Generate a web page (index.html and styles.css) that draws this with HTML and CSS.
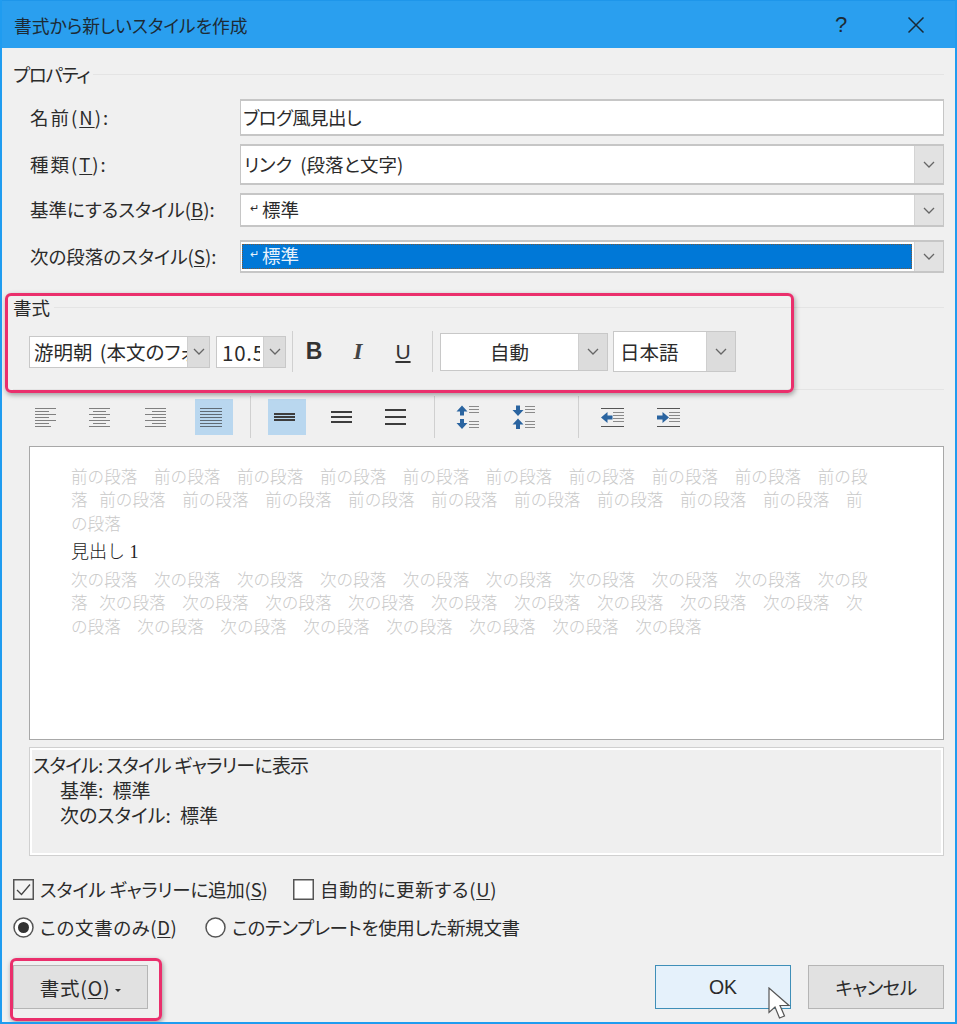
FILE: index.html
```html
<!DOCTYPE html>
<html lang="ja">
<head>
<meta charset="utf-8">
<title>書式から新しいスタイルを作成</title>
<link rel="stylesheet" href="styles.css">
</head>
<body>
<svg class="defs" width="0" height="0" aria-hidden="true">
  <symbol id="chev" viewBox="0 0 12 7"><path d="M1 1l5 5 5-5" fill="none" stroke="#666" stroke-width="1.3"/></symbol>
  <symbol id="al-left" viewBox="0 0 38 36"><path d="M8 9.500h21M8 12.500h14M8 15.500h21M8 18.500h14M8 21.500h21M8 24.500h14M8 27.500h16" stroke="#808080" fill="none"/></symbol>
  <symbol id="al-center" viewBox="0 0 38 36"><path d="M6 9.500h21M10 12.500h13M6 15.500h21M10 18.500h13M6 21.500h21M10 24.500h13M6 27.500h21" stroke="#808080" fill="none"/></symbol>
  <symbol id="al-right" viewBox="0 0 38 36"><path d="M6 9.500h21M13 12.500h14M6 15.500h21M13 18.500h14M6 21.500h21M13 24.500h14M6 27.500h21" stroke="#808080" fill="none"/></symbol>
  <symbol id="al-just" viewBox="0 0 38 36"><path d="M5 9.500h22M5 12.500h22M5 15.500h22M5 18.500h22M5 21.500h22M5 24.500h22M5 27.500h22" stroke="#5f6b75" fill="none"/></symbol>
  <symbol id="sp-1" viewBox="0 0 38 36"><path d="M6 15h21M6 18h21M6 21h21" stroke="#3d3d3d" stroke-width="2" fill="none"/></symbol>
  <symbol id="sp-15" viewBox="0 0 38 36"><path d="M8 13h21M8 18h21M8 23h21" stroke="#3d3d3d" stroke-width="2" fill="none"/></symbol>
  <symbol id="sp-2" viewBox="0 0 38 36"><path d="M8 11h21M8 18h21M8 25h21" stroke="#3d3d3d" stroke-width="2" fill="none"/></symbol>
  <symbol id="para-inc" viewBox="0 0 38 36"><path d="M10 6.500l5.500 6h-3.500v4h-4v-4h-3.500zM10 30l5.500-6h-3.500v-4h-4v4h-3.500z" fill="#2a64a0"/><path d="M17 7.500h10M17 10.500h10M17 13.500h10M17 22.500h10M17 25.500h10M17 28.500h10" stroke="#8a8a8a" fill="none"/></symbol>
  <symbol id="para-dec" viewBox="0 0 38 36"><path d="M10 17l5.500-6h-3.500v-4.500h-4v4.500h-3.500zM10 19.500l5.500 6h-3.500v4.500h-4v-4.500h-3.500z" fill="#2a64a0"/><path d="M17 7.500h10M17 10.500h10M17 13.500h10M17 22.500h10M17 25.500h10M17 28.500h10" stroke="#8a8a8a" fill="none"/></symbol>
  <symbol id="ind-dec" viewBox="0 0 38 36"><path d="M7 9.500h23M7 27.500h23" stroke="#555" fill="none"/><path d="M19 13.500h11M19 16.500h11M19 19.500h11M19 22.500h11" stroke="#8a8a8a" fill="none"/><path d="M7 18.500l6.500-5.500v3.500h5v4h-5v3.500z" fill="#2a64a0"/></symbol>
  <symbol id="ind-inc" viewBox="0 0 38 36"><path d="M8 9.500h23M8 27.500h23" stroke="#555" fill="none"/><path d="M20 13.500h11M20 16.500h11M20 19.500h11M20 22.500h11" stroke="#8a8a8a" fill="none"/><path d="M20 18.500l-6.500-5.500v3.500h-5.500v4h5.500v3.500z" fill="#2a64a0"/></symbol>
</svg>

<div class="dialog">
  <header class="titlebar">
    <h1 class="title">書式から新しいスタイルを作成</h1>
    <span class="help">?</span>
    <svg class="close" width="18" height="18" viewBox="0 0 18 18"><path d="M1.500 1.500l15 15M16.500 1.500l-15 15" stroke="#1a2a36" stroke-width="1.500" fill="none"/></svg>
  </header>

  <main class="content">
    <div class="legend legend-props"><span>プロパティ</span><i class="legend-line"></i></div>

    <div class="row row-name">
      <label class="row-label row-label-wide">名前(<u>N</u>):</label>
      <div class="field"><span class="value value-name">ブログ風見出し</span></div>
    </div>
    <div class="row row-type">
      <label class="row-label row-label-wide">種類(<u>T</u>):</label>
      <div class="field"><span class="value value-type">リンク (段落と文字)</span>
        <span class="drop"><svg width="12" height="7"><use href="#chev"/></svg></span></div>
    </div>
    <div class="row row-base">
      <label class="row-label">基準にするスタイル(<u>B</u>):</label>
      <div class="field"><span class="value value-style"><span class="ret">↵</span>標準</span>
        <span class="drop"><svg width="12" height="7"><use href="#chev"/></svg></span></div>
    </div>
    <div class="row row-next">
      <label class="row-label">次の段落のスタイル(<u>S</u>):</label>
      <div class="field"><span class="selected"><span class="ret">↵</span>標準</span>
        <span class="drop"><svg width="12" height="7"><use href="#chev"/></svg></span></div>
    </div>

    <div class="legend legend-format"><span>書式</span><i class="legend-line"></i></div>

    <div class="font-bar">
      <div class="combo combo-font"><span class="combo-text">游明朝 (本文のフォント)</span><span class="combo-drop"><svg width="12" height="7"><use href="#chev"/></svg></span></div>
      <div class="combo combo-size"><span class="combo-text">10.5</span><span class="combo-drop"><svg width="12" height="7"><use href="#chev"/></svg></span></div>
      <i class="sep sep-a"></i>
      <b class="fmt fmt-b">B</b>
      <span class="fmt fmt-i">I</span>
      <span class="fmt fmt-u">U</span>
      <i class="sep sep-b"></i>
      <div class="combo combo-color"><span class="combo-text">自動</span><span class="combo-drop"><svg width="12" height="7"><use href="#chev"/></svg></span></div>
      <div class="combo combo-lang"><span class="combo-text">日本語</span><span class="combo-drop"><svg width="12" height="7"><use href="#chev"/></svg></span></div>
    </div>

    <hr class="rule">

    <div class="para-bar">
      <div class="group group-1">
        <span class="tool"><svg width="38" height="36"><use href="#al-left"/></svg></span>
        <span class="tool"><svg width="38" height="36"><use href="#al-center"/></svg></span>
        <span class="tool"><svg width="38" height="36"><use href="#al-right"/></svg></span>
        <span class="tool on"><svg width="38" height="36"><use href="#al-just"/></svg></span>
      </div>
      <i class="sep sep-c"></i>
      <div class="group group-2">
        <span class="tool on"><svg width="38" height="36"><use href="#sp-1"/></svg></span>
        <span class="tool"><svg width="38" height="36"><use href="#sp-15"/></svg></span>
        <span class="tool"><svg width="38" height="36"><use href="#sp-2"/></svg></span>
      </div>
      <i class="sep sep-d"></i>
      <div class="group group-3">
        <span class="tool"><svg width="38" height="36"><use href="#para-inc"/></svg></span>
        <span class="tool"><svg width="38" height="36"><use href="#para-dec"/></svg></span>
      </div>
      <i class="sep sep-e"></i>
      <div class="group group-4">
        <span class="tool"><svg width="38" height="36"><use href="#ind-dec"/></svg></span>
        <span class="tool"><svg width="38" height="36"><use href="#ind-inc"/></svg></span>
      </div>
    </div>

    <section class="preview">
      <p class="ghost">前の段落　前の段落　前の段落　前の段落　前の段落　前の段落　前の段落　前の段落　前の段落　前の段落&ensp;&thinsp;前の段落　前の段落　前の段落　前の段落　前の段落　前の段落　前の段落　前の段落　前の段落　前の段落</p>
      <p class="sample">見出し 1</p>
      <p class="ghost">次の段落　次の段落　次の段落　次の段落　次の段落　次の段落　次の段落　次の段落　次の段落　次の段落&ensp;&thinsp;次の段落　次の段落　次の段落　次の段落　次の段落　次の段落　次の段落　次の段落　次の段落　次の段落　次の段落　次の段落　次の段落　次の段落　次の段落　次の段落　次の段落</p>
    </section>

    <section class="desc">
      <div class="desc-head">スタイル: スタイル ギャラリーに表示</div>
      <div class="desc-sub">基準: 標準</div>
      <div class="desc-sub">次のスタイル: 標準</div>
    </section>

    <div class="opt-row opt-row-a">
      <span class="check-item check-gallery">
        <svg class="box" width="21" height="21" viewBox="0 0 21 21"><rect x=".75" y=".75" width="19.500" height="19.500" fill="#f3f3f3" stroke="#555" stroke-width="1.500"/><path d="M4 11l4.500 4.500L17 5.500" fill="none" stroke="#444" stroke-width="1.300"/></svg>
        <span class="lbl-gallery">スタイル ギャラリーに追加(<u>S</u>)</span>
      </span>
      <span class="check-item">
        <svg class="box" width="21" height="21" viewBox="0 0 21 21"><rect x=".75" y=".75" width="19.500" height="19.500" fill="#fff" stroke="#555" stroke-width="1.500"/></svg>
        <span class="lbl-auto">自動的に更新する(<u>U</u>)</span>
      </span>
    </div>
    <div class="opt-row opt-row-b">
      <span class="check-item check-doc">
        <svg class="box" width="21" height="21" viewBox="0 0 21 21"><circle cx="10.500" cy="10.500" r="9.500" fill="#fff" stroke="#555" stroke-width="1.500"/><circle cx="10.500" cy="10.500" r="5.500" fill="#333"/></svg>
        <span class="lbl-doc">この文書のみ(<u>D</u>)</span>
      </span>
      <span class="check-item">
        <svg class="box" width="21" height="21" viewBox="0 0 21 21"><circle cx="10.500" cy="10.500" r="9.500" fill="#fff" stroke="#555" stroke-width="1.500"/></svg>
        <span class="lbl-tpl">このテンプレートを使用した新規文書</span>
      </span>
    </div>

    <div class="footer">
      <button class="btn btn-format">書式(<u>O</u>)<i class="caret"></i></button>
      <div class="footer-right">
        <button class="btn btn-ok">OK</button>
        <button class="btn btn-cancel">キャンセル</button>
      </div>
    </div>
  </main>

  <div class="mark mark-toolbar"></div>
  <div class="mark mark-button"></div>
  <svg class="cursor" width="24" height="33" viewBox="0 0 24 33"><path d="M1 1v24.500l6-5.500 4.500 11 5-2-4.500-10.500h9z" fill="#fff" stroke="#555" stroke-width="1.200"/></svg>
</div>
</body>
</html>
```

FILE: styles.css
```css
* { box-sizing: border-box; }
html, body { margin: 0; padding: 0; }
body {
  font-family: "Noto Sans CJK JP", "Noto Sans", sans-serif;
  font-size: 18.5px;
  color: #2b2b2b;
  font-feature-settings: "palt";
}
.defs { position: absolute; }
u { text-underline-offset: 2px; }

.dialog {
  position: relative;
  width: 957px;
  height: 1024px;
  overflow: hidden;
  background: #f0f0f0;
  border: solid #1f9cf0;
  border-width: 0 2px 2px;
}
.titlebar {
  display: flex;
  align-items: center;
  height: 48px;
  margin: 0 -2px;
  padding: 0 32px 0 14px;
  background: #2a9fef;
  border-top: 1px solid #1e96ea;
}
.title {
  flex: 1;
  margin: 0;
  font-size: 17.8px;
  font-weight: 400;
  color: #1d2b35;
}
.help {
  width: 20px;
  margin-right: 56px;
  font-family: "Liberation Sans", sans-serif;
  font-size: 22px;
  text-align: center;
  color: #1d2b35;
}

.content { padding: 15px 11px 0; }
.legend {
  display: flex;
  align-items: center;
  height: 22px;
  line-height: 20px;
}
.legend-line {
  flex: 1;
  height: 1px;
  margin-left: 4px;
  background: #e4e4e4;
}
.legend-props { margin-bottom: 14px; letter-spacing: -1.200px; }
.legend-format { margin-top: 23px; }

.row { display: flex; align-items: center; }
.row-label { width: 227px; padding: 0 0 2px 17px; font-size: 18.5px; white-space: nowrap; }
.row-label-wide { letter-spacing: 2px; }
.row-name { height: 37px; }
.row-type { height: 41px; margin-top: 8px; }
.row-base { height: 34px; margin-top: 8px; }
.row-next { height: 33px; margin-top: 13px; }

.field {
  display: flex;
  flex: 1;
  align-items: stretch;
  align-self: stretch;
  background: #fff;
  border: 1px solid #c6c6c6;
  border-width: 2px 1px 2px 1px;
}
.value { flex: 1; align-self: center; padding-bottom: 2px; }
.value-name { padding-left: 2px; letter-spacing: -.6px; }
.value-type { padding-left: 3px; word-spacing: 4px; }
.value-style { padding-left: 9px; }
.ret { font-size: 11px; line-height: 1; display: inline-block; width: 12px; vertical-align: 5px; color: inherit; }
.drop {
  display: flex;
  align-items: center;
  justify-content: center;
  width: 29px;
  background: #e2e2e2;
  border-left: 1px solid #d4d4d4;
}
.selected {
  flex: 1;
  display: block;
  margin: 2px 2px 2px 1px;
  padding-left: 8px;
  line-height: 23px;
  color: #e8f2fb;
  background: #0078d7;
  outline: 1px dotted #7a5a3c;
  outline-offset: -1px;
}

.font-bar {
  display: flex;
  align-items: center;
  height: 41px;
  margin-top: 13px;
  padding-left: 16px;
}
.combo {
  display: flex;
  align-items: stretch;
  background: #fff;
  border: 1px solid #c8c8c8;
  white-space: nowrap;
}
.combo-text {
  flex: 1;
  min-width: 0;
  overflow: hidden;
  align-self: center;
  line-height: 28px;
  font-size: 19.5px;
}
.combo-drop {
  display: flex;
  align-items: center;
  justify-content: center;
  background: #dcdcdc;
  border-left: 1px solid #cfcfcf;
}
.combo-font { width: 181px; height: 32px; }
.combo-font .combo-text { margin: 0 0 0 4px; word-spacing: 3px; }
.combo-font .combo-drop { width: 22px; }
.combo-size { width: 70px; height: 32px; margin-left: 6px; }
.combo-size .combo-text { margin: 0 3px 0 5px; letter-spacing: .8px; font-size: 20.5px; }
.combo-size .combo-drop { width: 22px; }
.combo-color { width: 168px; height: 38px; margin-left: 7px; }
.combo-color .combo-text { text-align: center; }
.combo-color .combo-drop { width: 29px; }
.combo-lang { width: 123px; height: 41px; margin-left: 5px; }
.combo-lang .combo-text { padding-left: 6px; }
.combo-lang .combo-drop { width: 29px; }

.sep { display: block; width: 1px; background: #d0d0d0; }
.font-bar .sep { height: 41px; }
.sep-a { margin-left: 6px; }
.sep-b { margin-left: 19px; }
.fmt {
  width: 20px;
  text-align: center;
  font-family: "Liberation Sans", sans-serif;
  font-size: 23px;
  color: #333;
}
.fmt-b { margin-left: 11px; font-weight: 700; }
.fmt-i { margin-left: 24px; font-family: "Liberation Serif", serif; font-style: italic; font-weight: 700; color: #444; }
.fmt-u { margin-left: 25px; text-decoration: underline; text-underline-offset: 2px; font-size: 21px; }

.rule {
  height: 1px;
  margin: 17px 0 0;
  border: 0;
  background: #e4e4e4;
}

.para-bar {
  display: flex;
  align-items: center;
  height: 42px;
  margin-top: 6px;
}
.para-bar .sep { height: 42px; }
.group { display: flex; }
.tool { display: block; width: 38px; height: 36px; }
.tool svg { display: block; }
.tool.on { background: #b9d7ef; }
.group-1 { gap: 18px; margin-left: 14px; }
.sep-c { margin-left: 17px; }
.group-2 { gap: 16.500px; margin-left: 17px; }
.sep-d { margin-left: 19px; }
.group-3 { gap: 18px; margin-left: 17px; }
.sep-e { margin-left: 32px; }
.group-4 { gap: 17px; margin-left: 15px; }

.preview {
  height: 294px;
  margin: 8px 0 0 16px;
  padding: 19px 72px 0 41px;
  background: #fff;
  border: 1px solid #a8a8a8;
  font-family: "Liberation Serif", "Noto Sans CJK JP", serif;
  font-size: 16.600px;
  font-weight: 300;
  font-feature-settings: normal;
}
.preview p { margin: 0; line-height: 23.300px; }
.ghost { color: #c9c9c9; }
.preview .sample { margin: 5px 0; font-size: 18px; color: #222; }

.desc {
  height: 109px;
  margin: 7px 0 0 16px;
  padding: 4px 3px;
  background: #efefef;
  border: 1px solid #d0d0d0;
  box-shadow: inset 0 0 0 2px #fff;
  line-height: 25px;
  font-size: 19px;
}
.desc-head { letter-spacing: -.8px; }
.desc-sub { padding-left: 27px; word-spacing: 5px; }

.opt-row { display: flex; align-items: center; height: 28px; }
.opt-row-a { margin-top: 19px; }
.opt-row-b { margin-top: 10px; }
.check-item { display: flex; align-items: center; gap: 6px; white-space: nowrap; }
.check-gallery { width: 280px; }
.check-doc { width: 192px; }
.box { display: block; flex: none; }
.lbl-gallery { letter-spacing: -.2px; }
.lbl-auto { letter-spacing: .7px; }
.lbl-doc { letter-spacing: .6px; }
.lbl-tpl { letter-spacing: -.35px; }

.footer {
  display: flex;
  justify-content: space-between;
  margin-top: 24px;
}
.footer-right { display: flex; gap: 17px; }
.btn {
  width: 136px;
  height: 44px;
  padding: 0;
  font: inherit;
  font-feature-settings: "palt";
  color: #2b2b2b;
  background: #e1e1e1;
  border: 1px solid #b5b5b5;
}
.btn-format { width: 135px; font-size: 19.500px; letter-spacing: .8px; }
.btn-cancel { letter-spacing: -.5px; }
.btn-ok {
  font-family: "Liberation Sans", sans-serif;
  font-size: 19.500px;
  background: #e5f1fb;
  border-color: #3f8fb8;
}
.caret {
  display: inline-block;
  margin: 0 0 4px 5px;
  border: solid transparent;
  border-width: 3px 3px 0;
  border-top-color: #333;
}

.mark {
  position: absolute;
  border: 3px solid #ea2f6c;
  border-radius: 6px;
  box-shadow: 1px 2px 5px rgba(0, 0, 0, .35);
}
.mark-toolbar { left: 3px; top: 293px; width: 789px; height: 100px; }
.mark-button { left: 8px; top: 958px; width: 152px; height: 63px; }
.cursor { position: absolute; left: 766px; top: 987px; }
.close { flex: none; }
```
